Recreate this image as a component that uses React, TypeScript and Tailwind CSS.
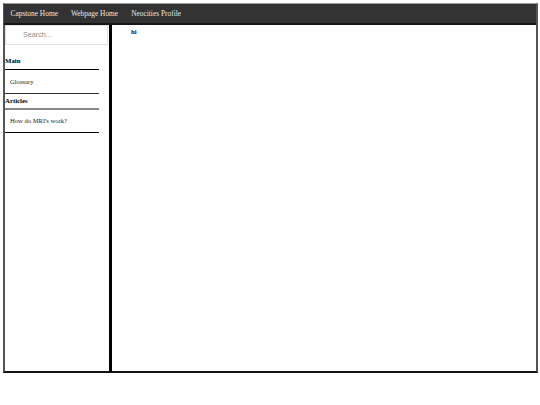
export default function App() {
  const serif = { fontFamily: '"Liberation Serif", "Times New Roman", serif' };
  const links = ['Capstone Home', 'Webpage Home', 'Neocities Profile'];

  return (
    <div className="w-[540px] h-[405px] bg-white" style={serif}>
      <div className="ml-[3px] mt-[3px] w-[535px] border-t border-t-[#9a9a9a] border-x-2 border-x-[#555] border-b-2 border-b-[#111]">
        {/* Top nav */}
        <nav className="h-[21px] bg-[#333] border-b-2 border-b-[#161616] flex items-center -ml-px">
          {links.map((l) => (
            <a key={l} className="px-[6.5px] text-[7.4px] text-[#e8e8e8] leading-none">
              {l}
            </a>
          ))}
        </nav>

        <div className="flex h-[346px]">
          {/* Sidebar */}
          <aside className="w-[107px] border-r-[3px] border-r-black">
            <div className="h-[20px] w-[103px] border border-[#e2e2e2] flex items-center pl-[17px]">
              <span
                className="text-[7.2px] text-[#8a8a8a]"
                style={{ fontFamily: '"Liberation Sans", Arial, sans-serif' }}
              >
                Search...
              </span>
            </div>
            <div className="w-[94px]">
              <div className="h-[24px] flex items-end pb-[4px] text-[6.8px] font-bold text-black leading-none">
                Main
              </div>
              <div className="h-px bg-black" />
              <div className="h-[23px] flex items-center pl-[5px] text-[6.6px] text-[#222]">Glossary</div>
              <div className="h-px bg-[#333]" />
              <div className="h-[14px] flex items-center text-[6.8px] font-bold text-black">Articles</div>
              <div className="h-[2px] bg-[#8a8a8a]" />
              <div className="h-[22px] flex items-center pl-[5px] text-[6.6px] text-[#222]">
                How do MRI's work?
              </div>
              <div className="h-px bg-black" />
            </div>
          </aside>

          {/* Content */}
          <main className="flex-1 pl-[19px] pt-[2px]">
            <p className="text-[6.8px] font-bold text-[#222]">hi</p>
          </main>
        </div>
      </div>
    </div>
  );
}
